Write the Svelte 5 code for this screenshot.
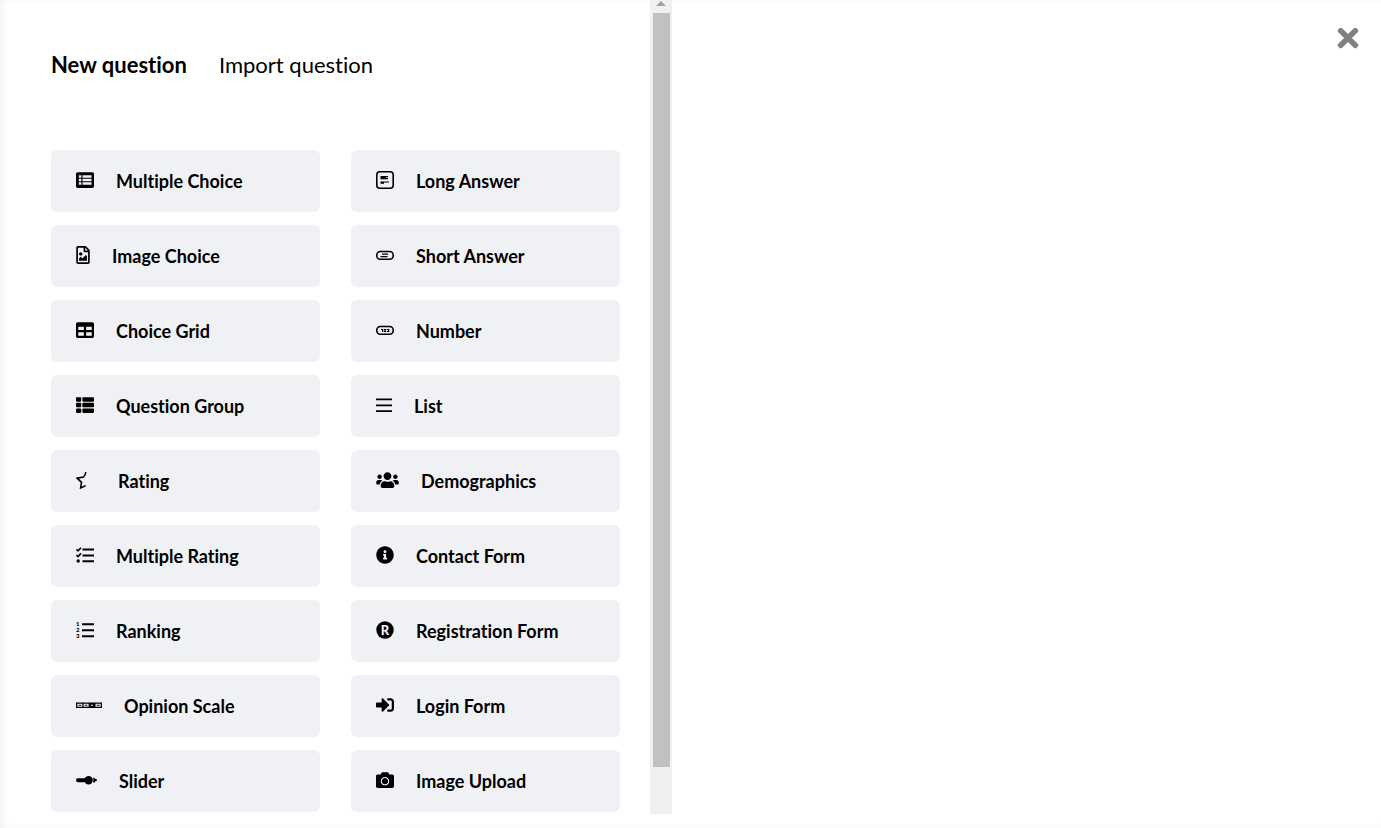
<script>
	let tab = $state('new');
	let open = $state(true);

	// w is the width of each icon on screen, box is its viewBox
	const questions = [
		{ name: 'Multiple Choice', w: 18, box: '0 0 512 512', d: 'M464 32H48C21.5 32 0 53.5 0 80v352c0 26.5 21.5 48 48 48h416c26.5 0 48-21.5 48-48V80c0-26.5-21.5-48-48-48zM80 120h72v72H80zM80 220h72v72H80zM80 320h72v72H80zM186 120h256v72H186zM186 220h256v72H186zM186 320h256v72H186z' },
		{ name: 'Long Answer', w: 18, box: '0 0 18 18', kind: 'long' },
		{ name: 'Image Choice', w: 14, box: '0 0 384 512', d: 'M369.9 97.9L286 14C277 5 264.8-.1 252.1-.1H48C21.5 0 0 21.5 0 48v416c0 26.5 21.5 48 48 48h288c26.5 0 48-21.5 48-48V131.9c0-12.7-5.1-25-14.1-34zM332.1 128H256V51.9l76.1 76.1zM48 464V48h160v104c0 13.3 10.7 24 24 24h104v288H48zm32-48h224V288l-23.5-23.5c-4.7-4.7-12.3-4.7-17 0L176 352l-39.5-39.5c-4.7-4.7-12.3-4.7-17 0L80 352v64zm48-240c-26.5 0-48 21.5-48 48s21.5 48 48 48 48-21.5 48-48-21.5-48-48-48z' },
		{ name: 'Short Answer', w: 18, box: '0 0 18 18', kind: 'short' },
		{ name: 'Choice Grid', w: 18, box: '0 0 512 512', d: 'M464 32H48C21.49 32 0 53.49 0 80v352c0 26.51 21.49 48 48 48h416c26.51 0 48-21.49 48-48V80c0-26.51-21.49-48-48-48zM224 416H64v-96h160v96zm0-160H64v-96h160v96zm224 160H288v-96h160v96zm0-160H288v-96h160v96z' },
		{ name: 'Number', w: 18, box: '0 0 18 18', kind: 'number' },
		{ name: 'Question Group', w: 18, box: '0 0 512 512', d: 'M149.333 216v80c0 13.255-10.745 24-24 24H24c-13.255 0-24-10.745-24-24v-80c0-13.255 10.745-24 24-24h101.333c13.255 0 24 10.745 24 24zM0 376v80c0 13.255 10.745 24 24 24h101.333c13.255 0 24-10.745 24-24v-80c0-13.255-10.745-24-24-24H24c-13.255 0-24 10.745-24 24zM125.333 32H24C10.745 32 0 42.745 0 56v80c0 13.255 10.745 24 24 24h101.333c13.255 0 24-10.745 24-24V56c0-13.255-10.745-24-24-24zm80 448H488c13.255 0 24-10.745 24-24v-80c0-13.255-10.745-24-24-24H205.333c-13.255 0-24 10.745-24 24v80c0 13.255 10.745 24 24 24zm-24-424v80c0 13.255 10.745 24 24 24H488c13.255 0 24-10.745 24-24V56c0-13.255-10.745-24-24-24H205.333c-13.255 0-24 10.745-24 24zm24 264H488c13.255 0 24-10.745 24-24v-80c0-13.255-10.745-24-24-24H205.333c-13.255 0-24 10.745-24 24v80c0 13.255 10.745 24 24 24z' },
		{ name: 'List', w: 16, box: '0 0 16 18', kind: 'list' },
		{ name: 'Rating', w: 20, box: '0 0 20 18', kind: 'star' },
		{ name: 'Demographics', w: 23, box: '0 0 640 512', d: 'M96 224c35.3 0 64-28.7 64-64s-28.7-64-64-64-64 28.7-64 64 28.7 64 64 64zm448 0c35.3 0 64-28.7 64-64s-28.7-64-64-64-64 28.7-64 64 28.7 64 64 64zm32 32h-64c-17.6 0-33.5 7.1-45.1 18.6 40.3 22.1 68.9 62 75.1 109.4h66c17.7 0 32-14.3 32-32v-32c0-35.3-28.7-64-64-64zm-256 0c61.9 0 112-50.1 112-112S381.9 32 320 32 208 82.1 208 144s50.1 112 112 112zm76.8 32h-8.3c-20.8 10-43.9 16-68.5 16s-47.6-6-68.5-16h-8.3C179.6 288 128 339.6 128 403.2V432c0 26.5 21.5 48 48 48h288c26.5 0 48-21.5 48-48v-28.8c0-63.6-51.6-115.2-115.2-115.2zm-223.7-13.4C161.5 263.1 145.6 256 128 256H64c-35.3 0-64 28.7-64 64v32c0 17.7 14.3 32 32 32h65.9c6.3-47.4 34.9-87.3 75.2-109.4z' },
		{ name: 'Multiple Rating', w: 18, box: '0 0 18 18', kind: 'tasks' },
		{ name: 'Contact Form', w: 18, box: '0 0 512 512', d: 'M256 8C119.043 8 8 119.083 8 256c0 136.997 111.043 248 248 248s248-111.003 248-248C504 119.083 392.957 8 256 8zm0 110c23.196 0 42 18.804 42 42s-18.804 42-42 42-42-18.804-42-42 18.804-42 42-42zm56 254c0 6.627-5.373 12-12 12h-88c-6.627 0-12-5.373-12-12v-24c0-6.627 5.373-12 12-12h12v-64h-12c-6.627 0-12-5.373-12-12v-24c0-6.627 5.373-12 12-12h64c6.627 0 12 5.373 12 12v100h12c6.627 0 12 5.373 12 12v24z' },
		{ name: 'Ranking', w: 18, box: '0 0 18 18', kind: 'ranking' },
		{ name: 'Registration Form', w: 18, box: '0 0 18 18', kind: 'registered' },
		{ name: 'Opinion Scale', w: 26, box: '0 0 26 18', kind: 'scale' },
		{ name: 'Login Form', w: 18, box: '0 0 512 512', d: 'M416 448h-84c-6.6 0-12-5.4-12-12v-40c0-6.6 5.4-12 12-12h84c17.7 0 32-14.3 32-32V160c0-17.7-14.3-32-32-32h-84c-6.6 0-12-5.4-12-12V76c0-6.6 5.4-12 12-12h84c53 0 96 43 96 96v192c0 53-43 96-96 96zm-47-209L201 71c-15-15-41-4.5-41 17v96H24c-13.3 0-24 10.7-24 24v96c0 13.3 10.7 24 24 24h136v96c0 21.5 26 32 41 17l168-168c9.3-9.4 9.3-24.6 0-34z' },
		{ name: 'Slider', w: 21, box: '0 0 21 18', kind: 'slider' },
		{ name: 'Image Upload', w: 18, box: '0 0 512 512', d: 'M512 144v288c0 26.5-21.5 48-48 48H48c-26.5 0-48-21.5-48-48V144c0-26.5 21.5-48 48-48h88l12.3-32.9c7-18.7 24.9-31.1 44.9-31.1h125.5c20 0 37.9 12.4 44.9 31.1L376 96h88c26.5 0 48 21.5 48 48zM376 288c0-66.2-53.8-120-120-120s-120 53.8-120 120 53.8 120 120 120 120-53.8 120-120zm-32 0c0 48.5-39.5 88-88 88s-88-39.5-88-88 39.5-88 88-88 88 39.5 88 88z' }
	];
</script>

{#if open}
<div class="overlay">

	<section class="panel">
		<div class="content">
			<nav class="tabs">
				<button class:active={tab === 'new'} onclick={() => (tab = 'new')}>New question</button>
				<button class:active={tab === 'import'} onclick={() => (tab = 'import')}>Import question</button>
			</nav>

			<div class="types">
				{#each questions as q}
					<button class="type">
						<svg width={q.w} height="18" viewBox={q.box} aria-hidden="true">
							{#if q.d}
								<path fill-rule="evenodd" d={q.d} />
							{:else if q.kind === 'long'}
								<rect class="line" x=".8" y=".8" width="16.4" height="16.4" rx="3" />
								<path d="M4.5 5H12v1.2H10V7h2v1.2H4.5zM4.5 10.5H13v1H8v1.2H4.5z" />
							{:else if q.kind === 'short'}
								<rect class="line" x=".8" y="5.5" width="16.4" height="7.8" rx="3.5" />
								<path d="M6 7.5h6v1.2H6zM4.5 10h7v1.2h-7z" />
							{:else if q.kind === 'number'}
								<rect class="line" x=".8" y="5.5" width="16.4" height="7.8" rx="3.5" />
								<path d="M5 8h2.300v3H6V9H5zM8 8h2.300v1l-1 1h1v1H8v-1l1-1H8zM11 8h2.300v3H11v-1h1v-1h-1z" />
							{:else if q.kind === 'list'}
								<path d="M0 2.500h16v1.800H0zM0 8.500h16v1.800H0zM0 14.300h16v1.800H0z" />
							{:else if q.kind === 'star'}
								<path class="line" d="M9.800 1C9.600 3 8.700 5 7.500 6L1.200 7.200 5.500 11.300 4.600 17 9.700 14.600" />
							{:else if q.kind === 'tasks'}
								<path d="M6.500 2.500H18v2H6.500zM6.500 8.500H18v2H6.500zM6.500 14.200H18v2H6.500z" />
								<path class="line" d="M.5 3.300l1.500 1.500L5 1.700M.5 9l1.500 1.500L5 7.400" />
								<circle cx="2.2" cy="15" r="1.7" />
							{:else if q.kind === 'ranking'}
								<path d="M6 2.300H18v2H6zM6 8.300H18v2H6zM6 14.300H18v2H6z" />
								<text class="digit" x="0" y="5">1</text>
								<text class="digit" x="0" y="11">2</text>
								<text class="digit" x="0" y="17">3</text>
							{:else if q.kind === 'registered'}
								<circle cx="9" cy="9" r="8.7" />
								<text class="mark" x="9" y="13.5" text-anchor="middle">R</text>
							{:else if q.kind === 'scale'}
								<path fill-rule="evenodd" d="M0 6.500h26v5.500H0zM1.300 7.800v3h5V7.800zM7.600 7.800v3h5V7.800zM19.500 7.800v3h5.200V7.800zM14.800 8.800v1h2.200v-1z" />
								<path d="M2.500 8.800h2.800v1H2.500zM8.800 8.800h2.600v1H8.800zM20.700 8.800h2.800v1h-2.800z" />
							{:else}
								<path d="M2 7.200h7v4H2a2 2 0 0 1 0-4zM17.300 6.500l1.700.8v.8c1.300 0 2 .5 2 1.200s-.7 1.200-2 1.200v.7l-1.700.6z" />
								<circle cx="12.6" cy="9.2" r="4.2" />
							{/if}
						</svg>
						<span>{q.name}</span>
					</button>
				{/each}
			</div>
		</div>

		<div class="scrollbar">
			<svg width="10" height="5" viewBox="0 0 10 5" aria-hidden="true">
				<path d="M5 0L10 5H0z" />
			</svg>
			<div class="thumb"></div>
		</div>
	</section>

	<button class="close" aria-label="Close" onclick={() => (open = false)}>
		<svg width="22" height="30" viewBox="0 0 352 512" aria-hidden="true">
			<path d="M242.72 256l100.07-100.07c12.28-12.28 12.28-32.19 0-44.48l-22.24-22.24c-12.28-12.28-32.19-12.28-44.48 0L176 189.28 75.93 89.21c-12.28-12.28-32.19-12.28-44.48 0L9.21 111.45c-12.28 12.28-12.28 32.19 0 44.48L109.28 256 9.21 356.07c-12.28 12.28-12.28 32.19 0 44.48l22.24 22.24c12.28 12.28 32.2 12.28 44.48 0L176 322.72l100.07 100.07c12.28 12.28 32.2 12.28 44.48 0l22.24-22.24c12.28-12.28 12.28-32.19 0-44.48L242.72 256z" />
		</svg>
	</button>

</div>
{/if}

<style>

	:global(body) {
		background: #fff;
	}

	.overlay {
		display: flex;
		justify-content: space-between;
		align-items: flex-start;
		height: 100vh;
		box-sizing: border-box;
		padding-bottom: 14px;
		overflow: hidden;
		font-family: Lato, "Open Sans", sans-serif;
		box-shadow: inset 4px 0 10px -4px rgba(0, 0, 0, 0.08);
	}

	button {
		border: none;
		background: none;
		padding: 0;
		color: #000;
		font-family: inherit;
		font-variant-ligatures: none;
		cursor: pointer;
	}

	.panel {
		display: flex;
		width: 48.66%;
		height: 100%;
		overflow: hidden;
	}

	.content {
		flex: 1;
		padding: 50px 30px 0 51px;
	}

	.tabs {
		display: flex;
		gap: 32px;
		margin-bottom: 70px;
	}

	.tabs button {
		font-size: 22px;
		line-height: 30px;
		white-space: nowrap;
	}

	.tabs .active {
		font-weight: 700;
	}

	.types {
		display: grid;
		grid-template-columns: 1fr 1fr;
		gap: 13px 31px;
	}

	.type {
		display: flex;
		align-items: center;
		gap: 22px;
		padding: 20px 25px;
		border-radius: 6px;
		background: #f0f1f5;
		font-size: 18px;
		font-weight: 700;
		line-height: 22px;
		text-align: left;
	}

	.type:hover {
		background: #e6e8f0;
	}

	.type svg {
		flex: none;
		margin-bottom: 2px;
	}

	.line {
		fill: none;
		stroke: #000;
		stroke-width: 1.6px;
	}

	.digit {
		font-size: 6px;
		font-weight: 900;
	}

	.mark {
		fill: #f0f1f5;
		font-size: 13px;
		font-weight: 900;
	}

	.scrollbar {
		display: flex;
		flex-direction: column;
		align-items: center;
		gap: 7px;
		width: 22px;
		box-sizing: border-box;
		padding: 1px 0 0 1px;
		background: #f0f0f0;
	}

	.scrollbar svg {
		flex: none;
		fill: #a0a0a0;
	}

	.thumb {
		width: 17px;
		height: 94%;
		margin-bottom: 47px;
		background: #c1c1c1;
	}

	.close {
		display: flex;
		margin: 23px 22px 0 0;
	}

	.close svg {
		fill: #808080;
	}

</style>
